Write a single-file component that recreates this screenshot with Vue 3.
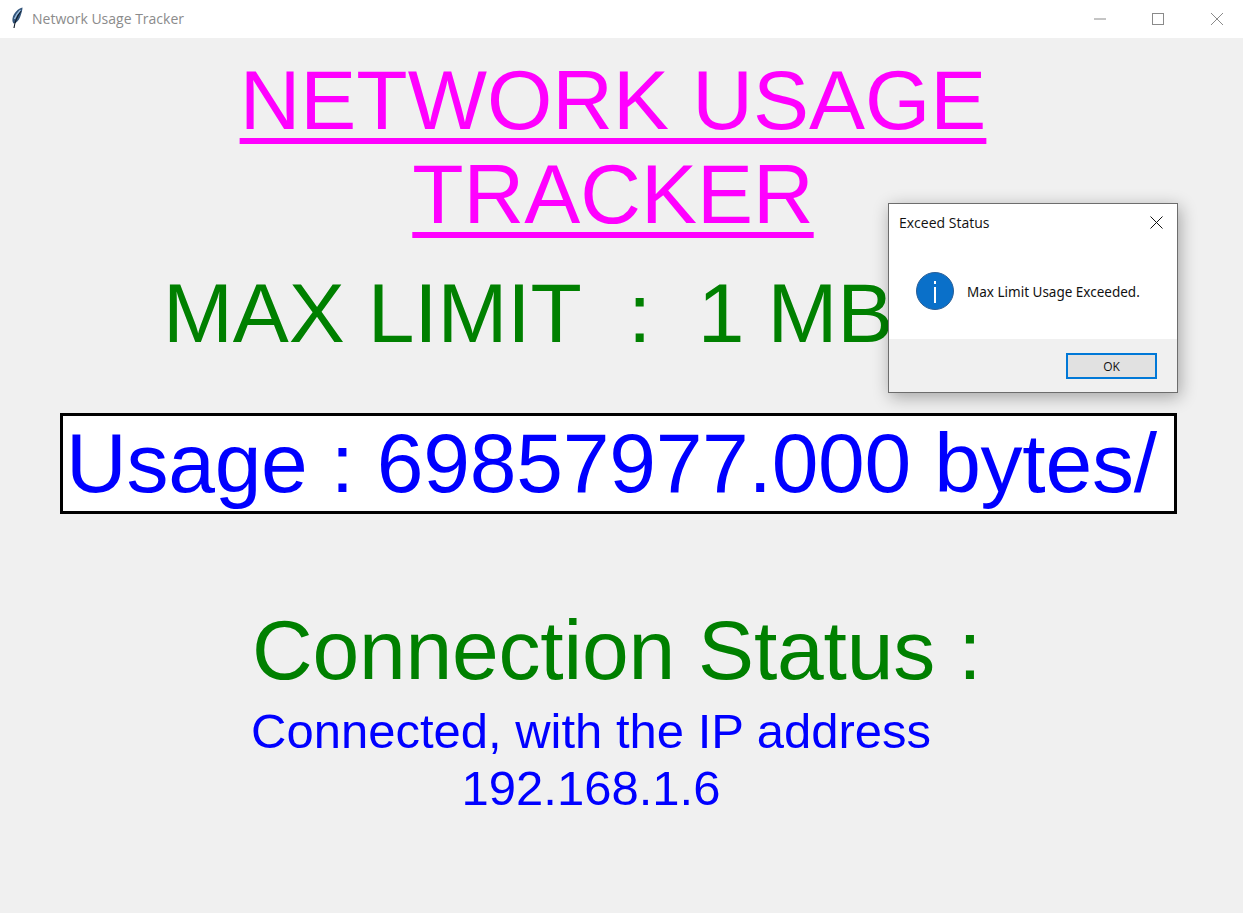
<script setup>
const title = ['NETWORK USAGE', 'TRACKER']
</script>

<template>
  <div class="window">
    <header class="titlebar">
      <div class="app-name">
        <svg class="feather" width="16" height="22" viewBox="0 0 16 22">
          <path d="M13.500 .5C9.500 1.500 4.500 5.500 3.500 11.500c-.3 2 0 3.500 1 5l2-.5c2.500-1.500 4.500-4.500 5.500-8.500 .7-2.500 1.500-4.500 1.500-7z" fill="#34567c" />
          <path d="M12 4C9 8 6 13 5 21" fill="none" stroke="#121c28" stroke-width="1.200" />
          <path d="M11.500 3C9.500 5 7 8 5.500 12" fill="none" stroke="#9dbfe0" stroke-width="1.300" />
        </svg>
        <span>Network Usage Tracker</span>
      </div>
      <div class="controls">
        <svg width="12" height="12" viewBox="0 0 12 12"><path d="M0 6H12" stroke="#8a8a8a" /></svg>
        <svg width="12" height="12" viewBox="0 0 12 12"><rect x=".5" y=".5" width="11" height="11" fill="none" stroke="#8a8a8a" /></svg>
        <svg width="14" height="14" viewBox="0 0 14 14"><path d="M1 1L13 13M13 1L1 13" stroke="#8a8a8a" /></svg>
      </div>
    </header>

    <main class="content">
      <h1 class="title">
        <span v-for="line in title" :key="line" class="title-line">{{ line }}</span>
      </h1>
      <p class="limit">MAX LIMIT&nbsp;&nbsp;:&nbsp;&nbsp;1 MB</p>
      <div class="usage">Usage : 69857977.000 bytes/</div>
      <p class="status-label">Connection Status :</p>
      <p class="status-value">Connected, with the IP address<br />192.168.1.6</p>
    </main>

    <section class="dialog">
      <div class="dialog-head">
        <span>Exceed Status</span>
        <svg width="13" height="13" viewBox="0 0 13 13"><path d="M.5.5L12.5 12.5M12.5.5L.5 12.5" stroke="#111" /></svg>
      </div>
      <div class="dialog-body">
        <svg width="38" height="38" viewBox="0 0 38 38">
          <circle cx="19" cy="19" r="18.500" fill="#0a70c9" stroke="#2a5f97" />
          <rect x="18" y="15" width="2" height="16" fill="#fff" />
          <rect x="18" y="9" width="2" height="3" fill="#fff" />
        </svg>
        <span class="message">Max Limit Usage Exceeded.</span>
      </div>
      <div class="dialog-foot">
        <button class="ok">OK</button>
      </div>
    </section>
  </div>
</template>

<style scoped>
.window {
  position: relative;
  width: 1243px;
  height: 913px;
  overflow: hidden;
  background: #f0f0f0;
  font-family: "Liberation Sans", Arial, sans-serif;
}
.titlebar {
  display: flex;
  justify-content: space-between;
  align-items: center;
  height: 38px;
  background: #fff;
  color: #8b8b8b;
  font-family: "Open Sans", sans-serif;
  font-size: 14px;
}
.app-name {
  display: flex;
  align-items: center;
  gap: 7px;
  padding-left: 9px;
  padding-bottom: 2px;
}
.controls {
  display: flex;
  align-items: center;
  gap: 46px;
  padding-right: 19px;
}
.content {
  display: flex;
  flex-direction: column;
  align-items: flex-start;
}
.title {
  display: flex;
  flex-direction: column;
  align-items: center;
  align-self: center;
  margin: 15px 0 0 -17px;
  color: #ff00ff;
  font-size: 84px;
  font-weight: 400;
  line-height: 94px;
}
.title-line {
  display: block;
  height: 94px;
  text-decoration: underline;
  text-decoration-thickness: 6px;
  text-underline-offset: 9px;
  text-decoration-skip-ink: none;
}
.limit {
  align-self: flex-start;
  margin: 25px 0 0 163px;
  color: #008000;
  font-size: 84px;
  letter-spacing: -0.15px;
  line-height: 94px;
}
.usage {
  box-sizing: border-box;
  width: 1117px;
  height: 101px;
  margin: 53px 0 0 60px;
  padding-left: 3px;
  border: 3px solid #000;
  background: #fff;
  color: #0000ff;
  font-size: 84px;
  letter-spacing: -0.25px;
  line-height: 94px;
  white-space: nowrap;
}
.status-label {
  margin: 89px 0 0 252px;
  color: #008000;
  font-size: 84px;
  letter-spacing: -0.2px;
  line-height: 94px;
}
.status-value {
  align-self: flex-start;
  width: 680px;
  margin: 6px 0 0 251px;
  color: #0000ff;
  font-size: 49px;
  line-height: 57px;
  text-align: center;
  white-space: nowrap;
}
.dialog {
  position: absolute;
  left: 888px;
  top: 203px;
  box-sizing: border-box;
  width: 290px;
  height: 190px;
  display: flex;
  flex-direction: column;
  border: 1px solid #6d6d6d;
  background: #fff;
  box-shadow: 2px 4px 16px rgba(0, 0, 0, 0.32);
  color: #111;
  font-family: "Open Sans", sans-serif;
  font-size: 14px;
}
.dialog-head {
  display: flex;
  justify-content: space-between;
  align-items: center;
  height: 36px;
  padding: 0 14px 0 10px;
}
.dialog-body {
  display: flex;
  align-items: center;
  gap: 12px;
  height: 99px;
  padding: 3px 0 0 27px;
  box-sizing: border-box;
  font-family: "Noto Sans", sans-serif;
  font-size: 13.500px;
}
.message {
  margin-top: 2px;
  padding-left: 1px;
}
.dialog-foot {
  flex: 1;
  display: flex;
  justify-content: flex-end;
  align-items: center;
  padding-right: 20px;
  background: #f0f0f0;
}
.ok {
  box-sizing: border-box;
  width: 91px;
  height: 26px;
  margin-top: 1px;
  border: 2px solid #0078d7;
  background: #e1e1e1;
  color: #111;
  font-family: "Open Sans", sans-serif;
  font-size: 12px;
}
</style>

<style>
html, body { margin: 0; }
</style>
